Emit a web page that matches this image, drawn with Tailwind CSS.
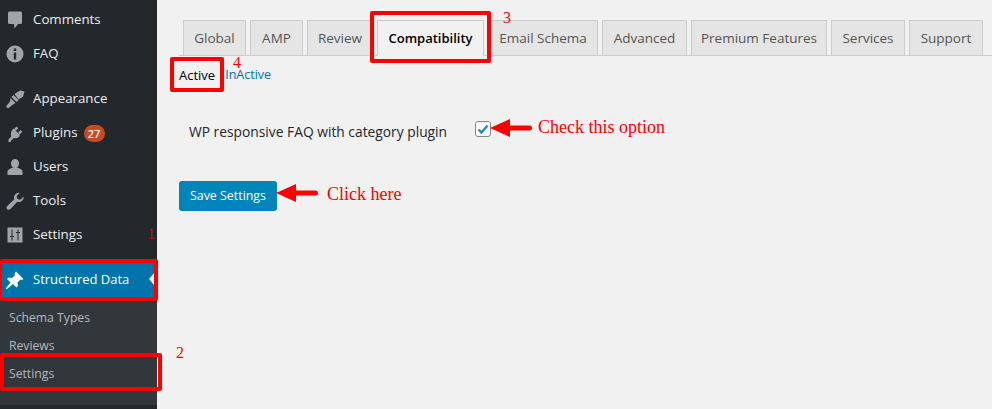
<!DOCTYPE html>
<html lang="en">
<head>
    <meta charset="UTF-8">
    <title>Settings</title>
    <script src="https://cdn.jsdelivr.net/npm/@tailwindcss/browser@4"></script>
</head>
<body class="overflow-hidden">
    <div class="relative flex w-[992px] h-[409px] bg-[#f1f1f1] overflow-hidden font-['Open_Sans',sans-serif]">

        <!-- admin menu -->
        <aside class="w-[157px] h-full shrink-0 bg-[#23282d] pt-[3px] text-[13.300px] text-[#eee]">
            <div class="flex items-center h-[34px]">
                <svg class="w-[20px] h-[20px] ml-[5px] mr-[8px] text-[#a0a5aa]" viewBox="0 0 20 20" fill="currentColor"><path d="M4.500 1.500h11a1.500 1.500 0 0 1 1.500 1.500v9.500a1.500 1.500 0 0 1-1.500 1.500H13l-3.500 4.500-.5-4.500H4.500A1.500 1.500 0 0 1 3 12.500V3a1.500 1.500 0 0 1 1.500-1.500z"/></svg>
                <span>Comments</span>
            </div>
            <div class="flex items-center h-[34px]">
                <svg class="w-[20px] h-[20px] ml-[5px] mr-[8px] text-[#a0a5aa]" viewBox="0 0 20 20" fill="currentColor"><path fill-rule="evenodd" d="M10 1.500a8.500 8.500 0 1 1 0 17 8.500 8.500 0 0 1 0-17zM8.800 4.500v2.600h2.400V4.500zM8.800 8.500v7h2.400v-7z"/></svg>
                <span>FAQ</span>
            </div>
            <div class="h-[11px]"></div>
            <div class="flex items-center h-[34px]">
                <svg class="w-[20px] h-[20px] ml-[5px] mr-[8px] text-[#a0a5aa]" viewBox="0 0 20 20" fill="currentColor"><path d="M9.500 5 15 1.500l4.500 1-1.500 5-4.500 3zM8.500 6l5 5-2 2-5-5zM5.500 9l5 5-2.500 1.500-5 4-2-2 4-5z"/></svg>
                <span>Appearance</span>
            </div>
            <div class="flex items-center h-[34px]">
                <svg class="w-[20px] h-[20px] ml-[5px] mr-[8px] text-[#a0a5aa]" viewBox="0 0 20 20" fill="currentColor"><path d="M8.500 5.500l6.500 6.500c-1 2.700-3.800 4-6.300 3L6 17.700v1.300H3.500v-2.500l2.800-3C5.300 11 6 7.500 8.500 5.500zM11.500 3.500l1.800 1.800-2.400 2.400-1.800-1.800zM15.500 7l1.800 1.800-2.400 2.400-1.800-1.800z"/></svg>
                <span>Plugins</span>
                <span class="ml-[6px] w-[21px] h-[17px] rounded-full bg-[#ca4a1f] text-white text-[11px] font-semibold leading-[17px] text-center">27</span>
            </div>
            <div class="flex items-center h-[34px]">
                <svg class="w-[20px] h-[20px] ml-[5px] mr-[8px] text-[#a0a5aa]" viewBox="0 0 20 20" fill="currentColor"><path d="M10 2a4 4.500 0 0 1 4 4.500c0 2-1 3.500-2 4.200 3 .6 5.500 2 5.500 3.800V18h-15v-3.500c0-1.800 2.500-3.200 5.500-3.800-1-.7-2-2.200-2-4.200A4 4.500 0 0 1 10 2z"/></svg>
                <span>Users</span>
            </div>
            <div class="flex items-center h-[34px]">
                <svg class="w-[20px] h-[20px] ml-[5px] mr-[8px] text-[#a0a5aa]" viewBox="0 0 20 20" fill="currentColor"><path d="M18.500 5.500c.4 2-.5 4-2.300 5-1.300.7-2.800.7-4 .2L5.500 18c-1 1-2.500 1-3.300.2-.9-.9-.8-2.300.1-3.200l7-6.800c-.5-1.300-.4-2.800.3-4 1-1.800 3-2.700 5-2.300l-3 3 .8 3 3 .8z"/></svg>
                <span>Tools</span>
            </div>
            <div class="flex items-center h-[34px]">
                <svg class="w-[20px] h-[20px] ml-[5px] mr-[8px] text-[#a0a5aa]" viewBox="0 0 20 20" fill="currentColor"><path fill-rule="evenodd" d="M2.500 2.500h15v15h-15zM6.500 4.500v6.500H5v1h1.500v3.500h1V12H9v-1H7.500V4.500zM12.500 4.500v2.500H11v1h1.500v7.500h1V8H15V7h-1.500V4.500z"/></svg>
                <span>Settings</span>
            </div>
            <div class="h-[11px]"></div>
            <div class="relative flex items-center h-[34px] bg-[#0073aa] text-white">
                <svg class="w-[20px] h-[20px] ml-[5px] mr-[8px] text-white" viewBox="0 0 20 20" fill="currentColor"><path d="M11 1.500l7.500 7.500-1.500 1-1.500-.5-3 3 .5 3.500-1.500 1.500-3.500-3.500L2 19l-1 0 0-1 4.500-5.500L2 9l1.500-1.500 3.500.5 3-3-.5-1.500z"/></svg>
                <span class="text-[13px]">Structured Data</span>
                <span class="absolute right-[3px] top-[10px] border-y-[6px] border-y-transparent border-r-[5px] border-r-[#f1f1f1]"></span>
            </div>
            <div class="bg-[#32373c] pt-[7px] pb-[17px] text-[12.200px] text-[#b4b9be]">
                <div class="flex items-center h-[28px] pl-[9px]">Schema Types</div>
                <div class="flex items-center h-[28px] pl-[9px]">Reviews</div>
                <div class="flex items-center h-[28px] pl-[9px]">Settings</div>
            </div>
        </aside>

        <!-- settings page -->
        <main class="flex-1 min-w-0 pt-[20px] text-[#23282d]">
            <nav class="flex h-[36px] ml-[22px] pl-[4px] border-b border-[#ccc] gap-[4px] text-[13.500px] font-medium text-[#555]">
                <a class="flex items-center justify-center w-[63px] h-[36px] pt-[1px] border border-[#ccc] bg-[#e5e5e5]">Global</a>
                <a class="flex items-center justify-center w-[53px] h-[36px] pt-[1px] border border-[#ccc] bg-[#e5e5e5]">AMP</a>
                <a class="flex items-center justify-center w-[66px] h-[36px] pt-[1px] border border-[#ccc] bg-[#e5e5e5]">Review</a>
                <a class="flex items-center justify-center w-[107px] h-[36px] pt-[1px] border border-[#ccc] border-b-[#f1f1f1] bg-[#f1f1f1] text-black text-[13px] font-semibold">Compatibility</a>
                <a class="flex items-center justify-center w-[110px] h-[36px] pt-[1px] border border-[#ccc] bg-[#e5e5e5]">Email Schema</a>
                <a class="flex items-center justify-center w-[85px] h-[36px] pt-[1px] border border-[#ccc] bg-[#e5e5e5]">Advanced</a>
                <a class="flex items-center justify-center w-[136px] h-[36px] pt-[1px] border border-[#ccc] bg-[#e5e5e5]">Premium Features</a>
                <a class="flex items-center justify-center w-[74px] h-[36px] pt-[1px] border border-[#ccc] bg-[#e5e5e5]">Services</a>
                <a class="flex items-center justify-center w-[74px] h-[36px] pt-[1px] border border-[#ccc] bg-[#e5e5e5]">Support</a>
            </nav>
            <div class="flex ml-[22px] mt-[10px] h-[18px] items-center">
                <span class="text-[13px] leading-[12px] font-medium text-black">Active</span>
                <span class="ml-[10px] text-[12.500px] leading-[12px] text-[#0073aa]">InActive</span>
            </div>
            <div class="flex items-center ml-[32px] mt-[37px] h-[20px]">
                <span class="w-[286px] pt-[2px] text-[13.800px] font-medium">WP responsive FAQ with category plugin</span>
                <span class="flex items-center justify-center w-[16px] h-[16px] -mt-[4px] rounded-[3px] border border-[#7e8993] bg-white">
                    <svg class="w-[12px] h-[12px] text-[#1e8cbe]" viewBox="0 0 12 12" fill="none" stroke="currentColor" stroke-width="2.400"><path d="M1.500 6.500 4.500 9.500 10.500 2.500"/></svg>
                </span>
            </div>
            <button class="block ml-[22px] mt-[40px] w-[98px] h-[30px] rounded-[3px] bg-[#0085ba] text-white text-[12.400px] font-normal">Save Settings</button>
        </main>

        <!-- red annotations drawn on top of the screenshot -->
        <div class="absolute left-0 top-[259px] w-[158px] h-[42px] border-[4px] border-l-[2px] border-[#f00] rounded-[2px]"></div>
        <div class="absolute left-0 top-[353px] w-[162px] h-[38px] border-[4px] border-[#f00] rounded-[2px]"></div>
        <div class="absolute left-[370px] top-[11px] w-[121px] h-[52px] border-[4px] border-[#f00] rounded-[2px]"></div>
        <div class="absolute left-[170px] top-[57px] w-[54px] h-[35px] border-[4px] border-[#f00] rounded-[2px]"></div>

        <span class="absolute left-[147px] top-[224px] text-[16px] leading-[20px] text-[#c00] font-['Liberation_Serif',serif]">1</span>
        <span class="absolute left-[176px] top-[343px] text-[16px] leading-[20px] text-[#f00] font-['Liberation_Serif',serif]">2</span>
        <span class="absolute left-[503px] top-[8px] text-[16px] leading-[20px] text-[#f00] font-['Liberation_Serif',serif]">3</span>
        <span class="absolute left-[233px] top-[57px] text-[16px] leading-[12px] text-[#f00] font-['Liberation_Serif',serif]">4</span>

        <svg class="absolute left-[489px] top-[118px] w-[44px] h-[20px] text-[#f00]" viewBox="0 0 44 20" fill="currentColor"><path d="M1 10 21 1v6.500h19.500a2.500 2.500 0 0 1 0 5H21V19z"/></svg>
        <span class="absolute left-[538px] top-[115px] text-[18px] leading-[24px] text-[#f00] font-['Liberation_Serif',serif]">Check this option</span>
        <svg class="absolute left-[275px] top-[183px] w-[44px] h-[20px] text-[#f00]" viewBox="0 0 44 20" fill="currentColor"><path d="M1 10 21 1v6.500h19.500a2.500 2.500 0 0 1 0 5H21V19z"/></svg>
        <span class="absolute left-[327px] top-[182px] text-[18px] leading-[24px] text-[#f00] font-['Liberation_Serif',serif]">Click here</span>
    </div>
</body>
</html>
